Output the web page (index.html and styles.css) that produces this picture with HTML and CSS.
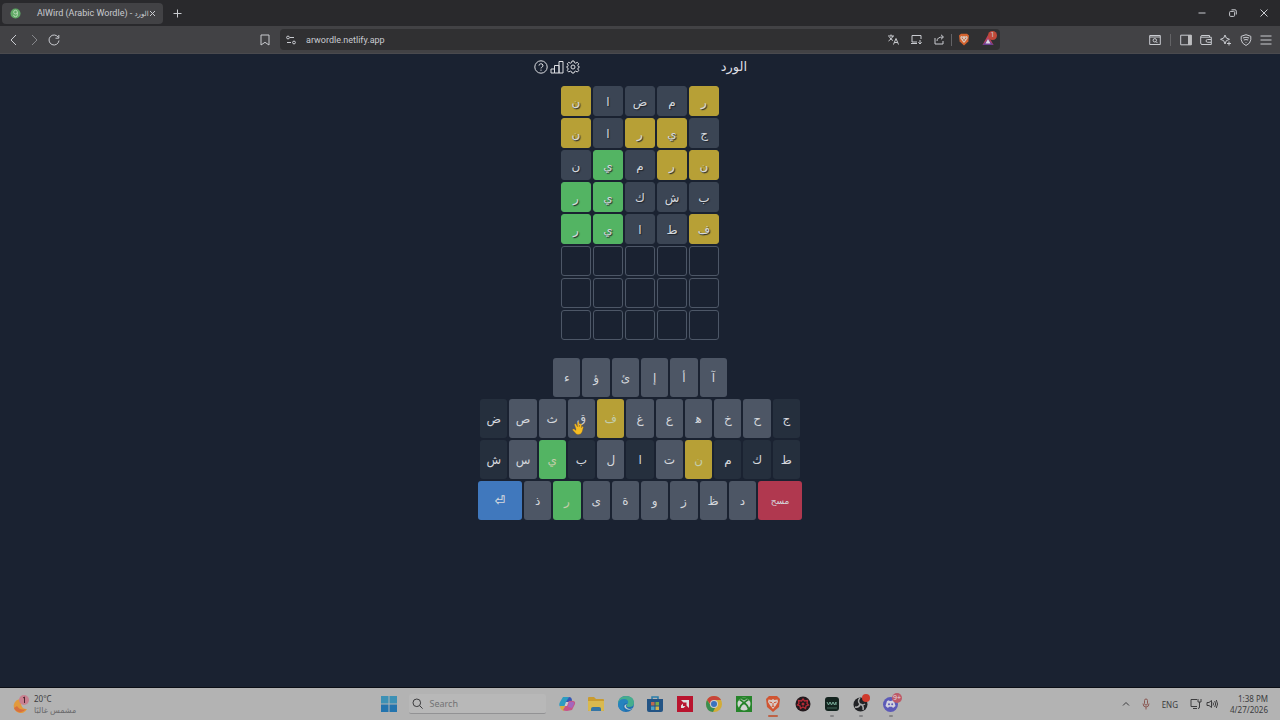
FILE: index.html
```html
<!DOCTYPE html>
<html lang="en">
<head>
    <meta charset="UTF-8">
    <meta name="viewport" content="width=device-width, initial-scale=1.0">
    <title>AlWird (Arabic Wordle) - الورد</title>
    <link rel="stylesheet" href="styles.css">
</head>
<body>
    <!-- Browser tabs -->
    <div class="tab-strip">
        <div class="tab">
            <svg class="favicon" viewBox="0 0 12 12"><circle cx="6" cy="6" r="5.5" fill="#5fa865"/><path d="M4 4.500a2 2 0 1 1 4 0v3a2 2 0 0 1-4 0M4 4.500a2 2 0 0 0 4 0" stroke="#b9dcb8" fill="none"/></svg>
            <span class="tab-title">AlWird (Arabic Wordle) - <span class="tab-title-ar" lang="ar">الورد</span></span>
            <button class="bare" aria-label="Close tab"><svg width="7" height="7" viewBox="0 0 7 7"><path d="M1 1l5 5M6 1L1 6"/></svg></button>
        </div>
        <button class="bare" aria-label="New tab"><svg width="9" height="9" viewBox="0 0 9 9"><path d="M4.500 .5v8M.5 4.500h8"/></svg></button>
        <div class="window-buttons">
            <button class="bare" aria-label="Minimize"><svg width="8" height="8" viewBox="0 0 8 8"><path d="M.5 4h7"/></svg></button>
            <button class="bare" aria-label="Restore"><svg width="8" height="8" viewBox="0 0 8 8"><rect x=".6" y="2.400" width="5" height="5" rx="1"/><path d="M2.500 .8h3.500q1.300 0 1.300 1.300V5.500"/></svg></button>
            <button class="bare" aria-label="Close"><svg width="8" height="8" viewBox="0 0 8 8"><path d="M.5.5l7 7M7.500.5l-7 7"/></svg></button>
        </div>
    </div>

    <!-- Address bar -->
    <div class="toolbar">
        <div class="nav-buttons">
            <button class="bare" aria-label="Back"><svg width="12" height="12" viewBox="0 0 12 12"><path d="M8 1L3 6l5 5"/></svg></button>
            <button class="bare dim" aria-label="Forward"><svg width="12" height="12" viewBox="0 0 12 12"><path d="M4 1l5 5-5 5"/></svg></button>
            <button class="bare" aria-label="Reload"><svg width="12" height="12" viewBox="0 0 12 12"><path d="M10.300 3.400A5 5 0 1 0 11 6.500M10.800 1v3.200H7.500"/></svg></button>
        </div>
        <button class="bare bookmark" aria-label="Bookmark"><svg width="12" height="12" viewBox="0 0 12 12"><path d="M2 1h8v10L6 8.300 2 11z"/></svg></button>
        <div class="address">
            <svg width="10" height="10" viewBox="0 0 10 10"><circle cx="2" cy="2.500" r="1.400"/><path d="M4 2.500h4M1 7.500h4"/><circle cx="8" cy="7.500" r="1.400"/></svg>
            <input type="text" class="url" value="arwordle.netlify.app" aria-label="Address">
            <button class="bare" aria-label="Translate"><svg width="11" height="11" viewBox="0 0 11 11"><path d="M0 2h6M3 .5V2M5 2Q4 5 .5 7M1.500 3q1.500 3 3.500 3.500M5.500 10.500L8 4.500l2.500 6M6.300 8.500h3.400"/></svg></button>
            <button class="bare" aria-label="Install"><svg width="11" height="11" viewBox="0 0 11 11"><path d="M10 5V1.500H1V8h5M0 9.500h6M9 6v4M7.300 8.300L9 10l1.700-1.700"/></svg></button>
            <button class="bare" aria-label="Share"><svg width="11" height="11" viewBox="0 0 11 11"><path d="M1 4v6h8V7M3 7q0-4 6-4M7 .8L9.500 3 7 5.300"/></svg></button>
            <span class="separator"></span>
            <button class="bare" aria-label="Brave Shields"><svg width="12" height="13" viewBox="0 0 12 13"><path class="shape" d="M3 .8h6l2 1.700-.7 6L6 12.500 1.700 8.500 1 2.500z" fill="#d4632f"/><path class="shape" d="M3 3l1.800.5L6 3l1.200.5L9 3l.8 2-2 3L6 10 4.200 8l-2-3z" fill="#d9c5ba"/><path d="M3.800 5l1.200.5M8.200 5L7 5.500M6 6v2" stroke="#b4562f"/></svg></button>
            <button class="bare rewards" aria-label="Rewards">
                <svg width="12" height="12" viewBox="0 0 12 12"><path class="shape" d="M6 1l5.500 10H.5z" fill="#bd425c"/><path class="shape" d="M6 5l5.500 6H.5z" fill="#6c3e91"/><path class="shape" d="M6 5l2.500 4.500h-5z" fill="#dfd9e3"/></svg>
                <span class="rewards-badge">1</span>
            </button>
        </div>
        <div class="side-buttons">
            <button class="bare" aria-label="Search tabs"><svg width="12" height="12" viewBox="0 0 12 12"><path d="M.7 1.500h10.600v9H.7zM.7 3h10.600"/><circle cx="5.800" cy="6.300" r="1.700"/><path d="M7 7.600l1.500 1.500"/></svg></button>
            <span class="separator"></span>
            <button class="bare" aria-label="Sidebar"><svg width="12" height="12" viewBox="0 0 12 12"><path d="M.7 1.200h10.600v9.600H.7z"/><path class="shape" d="M8 1h3.500v10H8z" fill="#bdbdbf"/></svg></button>
            <button class="bare" aria-label="Wallet"><svg width="12" height="12" viewBox="0 0 12 12"><path d="M9.500 3V1.500H2Q.7 1.500.7 3v6q0 1.500 1.300 1.500h9.300V3.200H1M11 5.500H7.500a1.300 1.300 0 0 0 0 2.800H11"/></svg></button>
            <button class="bare" aria-label="Leo AI"><svg width="12" height="12" viewBox="0 0 12 12"><path d="M5 1l1.300 3L9.500 5.300 6.300 6.700 5 10 3.700 6.700.5 5.300 3.700 4zM9 7.500v4M7 9.500h4"/></svg></button>
            <button class="bare" aria-label="VPN"><svg width="12" height="12" viewBox="0 0 12 12"><path d="M6 .7l4.800 1.600v3.400Q10.500 9.500 6 11.500 1.500 9.500 1.200 5.700V2.300zM3 4q3-1.500 6 0M3.800 6q2.200-1 4.400 0M6 8v.7"/></svg></button>
            <button class="bare" aria-label="Menu"><svg width="12" height="12" viewBox="0 0 12 12"><path d="M.5 2h11M.5 6h11M.5 10h11"/></svg></button>
        </div>
    </div>

    <!-- Game -->
    <main>
        <header class="game-header">
            <div class="game-menu">
                <button class="bare" aria-label="Help"><svg width="16" height="16" viewBox="0 0 16 16"><circle cx="8" cy="8" r="6.200"/><path d="M6 6.600a2 1.800 0 1 1 2.800 1.600Q8 8.600 8 9.400M8 10.600v1.200"/></svg></button>
                <button class="bare" aria-label="Statistics"><svg width="16" height="16" viewBox="0 0 16 16"><path d="M2 10h3.500v4H2zM5.500 6.500H10V14H5.500zM10 2.500h4V14h-4z"/></svg></button>
                <button class="bare" aria-label="Settings"><svg width="16" height="16" viewBox="0 0 16 16"><circle cx="8" cy="8" r="2"/><path d="M7 2h2l.5 1.700 1.200.5 1.600-.9 1.400 1.400-.9 1.600.5 1.200L14.500 8l-1.200.8-.5 1.200.9 1.600-1.400 1.400-1.600-.9-1.200.5L9 14H7l-.5-1.400-1.200-.5-1.600.9-1.400-1.400.9-1.600-.5-1.200L1.500 8l1.200-.5.5-1.200-.9-1.600 1.400-1.400 1.600.9 1.200-.5z"/></svg></button>
            </div>
            <h1>الورد</h1>
        </header>

        <div class="board" dir="rtl" lang="ar">
            <div class="cell present">ر</div><div class="cell absent">م</div><div class="cell absent">ض</div><div class="cell absent">ا</div><div class="cell present">ن</div>
            <div class="cell absent">ج</div><div class="cell present">ي</div><div class="cell present">ر</div><div class="cell absent">ا</div><div class="cell present">ن</div>
            <div class="cell present">ن</div><div class="cell present">ر</div><div class="cell absent">م</div><div class="cell correct">ي</div><div class="cell absent">ن</div>
            <div class="cell absent">ب</div><div class="cell absent">ش</div><div class="cell absent">ك</div><div class="cell correct">ي</div><div class="cell correct">ر</div>
            <div class="cell present">ف</div><div class="cell absent">ط</div><div class="cell absent">ا</div><div class="cell correct">ي</div><div class="cell correct">ر</div>
            <div class="cell"></div><div class="cell"></div><div class="cell"></div><div class="cell"></div><div class="cell"></div>
            <div class="cell"></div><div class="cell"></div><div class="cell"></div><div class="cell"></div><div class="cell"></div>
            <div class="cell"></div><div class="cell"></div><div class="cell"></div><div class="cell"></div><div class="cell"></div>
        </div>

        <div class="keyboard" dir="rtl" lang="ar">
            <div class="key-row row-short">
                <button class="key">آ</button><button class="key">أ</button><button class="key">إ</button><button class="key">ئ</button><button class="key">ؤ</button><button class="key">ء</button>
            </div>
            <div class="key-row row-letters">
                <button class="key absent">ج</button><button class="key">ح</button><button class="key">خ</button><button class="key">ه&zwj;</button><button class="key">ع</button><button class="key">غ</button><button class="key present">ف</button><button class="key hovered">ق<svg class="pointer" width="12" height="14" viewBox="0 0 12 14"><path d="M4 8L2.500 3.500Q3 2 4 3.200L5.500 6V1.500q.8-1.200 1.600 0V6l1-3q1-.8 1.500.3L9.300 7l1-1.500q1-.3 1 .8L10 11q-1 2.500-4 2.500-2 0-3-2L.6 9Q.7 7.500 2 8l2 1.500z" fill="#f5bd22" stroke="#a36e16" stroke-width=".3"/></svg></button><button class="key">ث</button><button class="key">ص</button><button class="key absent">ض</button>
            </div>
            <div class="key-row row-letters">
                <button class="key absent">ط</button><button class="key absent">ك</button><button class="key absent">م</button><button class="key present">ن</button><button class="key">ت</button><button class="key absent">ا</button><button class="key">ل</button><button class="key absent">ب</button><button class="key correct">ي</button><button class="key">س</button><button class="key absent">ش</button>
            </div>
            <div class="key-row">
                <button class="key delete">مسح</button><button class="key">د</button><button class="key">ظ</button><button class="key">ز</button><button class="key">و</button><button class="key">ة</button><button class="key">ى</button><button class="key correct">ر</button><button class="key">ذ</button><button class="key enter">⏎</button>
            </div>
        </div>
    </main>

    <!-- Taskbar -->
    <footer class="taskbar">
        <div class="weather">
            <svg width="18" height="20" viewBox="0 0 18 20"><path d="M9 5a7 7 0 1 0 6 10Q8 16 9 5" fill="#e29a3c"/><path d="M5 12q3 5 9 3-3 4-7 3t-5-4z" fill="#d7703e"/><circle cx="12" cy="6" r="5" fill="#c98090"/><path d="M11 4l1.500-1v6" stroke="#4c2733" fill="none"/></svg>
            <div>
                <div>20°C</div>
                <div class="muted" dir="rtl" lang="ar">مشمس غالبًا</div>
            </div>
        </div>
        <div class="apps">
            <button class="app" aria-label="Start"><svg viewBox="0 0 18 18"><path d="M1 1h7.500v7.500H1zM9.500 1H17v7.500H9.500z" fill="#3d91b5"/><path d="M1 9.500h7.500V17H1zM9.500 9.500H17V17H9.500z" fill="#2374ae"/></svg></button>
            <label class="search">
                <svg width="11" height="11" viewBox="0 0 11 11"><circle cx="4.800" cy="4.800" r="3.800"/><path d="M7.600 7.600l3 3"/></svg>
                <input type="search" placeholder="Search" aria-label="Search">
            </label>
            <button class="app" aria-label="Copilot"><svg viewBox="0 0 18 18"><path d="M5 2h6l-3 9-5 1Q0 11 2 7z" fill="#2d9cc1"/><path d="M11 2q3 0 3 4l-3 1H8z" fill="#3455b5"/><path d="M2 11h5l-1 5q-4-1-4-5" fill="#d5ac44"/><path d="M5 15l3-5 3-4q7-1 6 3l-3 6-5 1q-3 0-4-1" fill="#c65487"/><path d="M11 7q6-1 5 2l-2 4-4-1z" fill="#a366bd"/><path d="M8 7h2.500L9 11H6.500z" fill="#ccc"/></svg></button>
            <button class="app" aria-label="File Explorer"><svg viewBox="0 0 18 18"><path d="M1 3q0-1 1-1h5l2 2h7q1 0 1 1v11H1z" fill="#c99b2f"/><path d="M1 6h16v9q0 1-1 1H2q-1 0-1-1z" fill="#d9b94f"/><path d="M4 16v-2q0-2 2-2h6q2 0 2 2v2z" fill="#3475a5"/></svg></button>
            <button class="app" aria-label="Microsoft Edge"><svg viewBox="0 0 18 18"><circle cx="9" cy="9" r="8" fill="#2170b0"/><path d="M1 8Q2 1 9 1q8 0 8 7 0 4-5 4-3 0-2-2 1-4-3-4-4 0-6 4" fill="#45ad8d"/><path d="M1 9q1-5 6-5 5 0 4 5-2-2-4 0-2 3 1 7-7 0-7-7" fill="#2583be"/><path d="M10 9q-2 2 0 4 3 2 6 0l-1 1q-4 2-7-1-2-3 2-4" fill="#c6cdd0"/></svg></button>
            <button class="app" aria-label="Microsoft Store"><svg viewBox="0 0 18 18"><path d="M6 5V2h6v3" fill="none" stroke="#287eac" stroke-width="1.500"/><path d="M1 4h16v11q0 2-2 2H3q-2 0-2-2z" fill="#235485"/><path d="M5 7h3.500v3.500H5z" fill="#bd6851"/><path d="M9.500 7H13v3.500H9.500z" fill="#79a94b"/><path d="M5 11.500h3.500V15H5z" fill="#4da2c6"/><path d="M9.500 11.500H13V15H9.500z" fill="#d1b34f"/></svg></button>
            <button class="app" aria-label="AMD Software"><svg viewBox="0 0 18 18"><path d="M1 1h16v16H1z" fill="#b9142e"/><path d="M5 5h8v8l-2.500-2.500v-3h-3z" fill="#ddd"/><path d="M5 10.500L7 8.500V11h2.500l-2 2H5z" fill="#ddd"/></svg></button>
            <button class="app" aria-label="Chrome"><svg viewBox="0 0 18 18"><circle cx="9" cy="9" r="8" fill="#d2ac36"/><path d="M2 5q2-4 7-4t7 4H9L6 10z" fill="#c7443a"/><path d="M2 5l4 6 4 2-2 4Q1 16 1 9q0-2 1-4" fill="#398d50"/><circle cx="9" cy="9" r="4" fill="#ccc"/><circle cx="9" cy="9" r="3" fill="#3972bd"/></svg></button>
            <button class="app" aria-label="Xbox"><svg viewBox="0 0 18 18"><path d="M1 1h16v16H1z" fill="#26842a"/><circle cx="9" cy="9" r="6.500" fill="#d0d4d0"/><path d="M4.500 4Q6.500 3.500 9 5.500 11.500 3.500 13.500 4 9 1 4.500 4" fill="#26842a"/><path d="M4.500 4.500Q8 6.500 9 8q1-1.500 4.500-3.500M9 7.500Q5 10.500 4.500 14M9 7.500q4 3 4.500 6.500" stroke="#26842a" stroke-width="1.600" fill="none"/></svg></button>
            <button class="app active" aria-label="Brave"><svg viewBox="0 0 18 18"><path d="M5 1h8l3 3-1 8-6 5-6-5-1-8z" fill="#d05532"/><path d="M4.500 4.500l3 .5L9 4l1.500 1 3-.5L14 7l-2.500 4L9 14l-2.500-3L4 7z" fill="#d9cbc5"/><path d="M5.500 7l2.500.7M12.500 7l-2.500.7M9 8v3l-1.500 1M9 11l1.500 1" stroke="#d05532" fill="none"/></svg></button>
            <button class="app" aria-label="Game launcher"><svg viewBox="0 0 18 18"><circle cx="9" cy="9" r="7.500" fill="#231a1e"/><path d="M9 4l1.500 2 3-.5-.5 3 1.500 1.500-2.500 1-.5 2.500L9 12l-2.500 1.500L6 11l-2.500-1L5 8.500l-.5-3 3 .5z" fill="none" stroke="#b62a35" stroke-width="1.300"/><circle cx="9" cy="9" r="1.500" fill="#b62a35"/></svg></button>
            <button class="app running" aria-label="Recorder"><svg viewBox="0 0 18 18"><rect x="2" y="2" width="14" height="14" rx="3" fill="#14241f"/><path d="M4 7l1.500 3L7 7l1.500 3L10 7l1.500 3L13 7v3" fill="none" stroke="#78aa98"/><path d="M4 13h10" stroke="#42665a"/></svg></button>
            <button class="app running" aria-label="OBS Studio"><svg viewBox="0 0 18 18"><circle cx="8.500" cy="9.500" r="7" fill="#222326"/><path d="M8 3q-3 3 0 6 2 2 5 0M8 9q-1 4-5 3M8 9q4 1 3 6" stroke="#a9a9aa" fill="none" stroke-width="1.500"/></svg><span class="app-badge"></span></button>
            <button class="app running" aria-label="Discord"><svg viewBox="0 0 18 18"><circle cx="8.500" cy="9.500" r="7.500" fill="#5c5ab8"/><path d="M5 6l2-.7.5.7h2l.5-.7 2 .7 1.500 5-2.500 2-1-1.300H7L6 13l-2.500-2z" fill="#d3d2df"/><circle cx="7" cy="9.300" r="1" fill="#5c5ab8"/><circle cx="10.200" cy="9.300" r="1" fill="#5c5ab8"/></svg><span class="app-badge count">9+</span></button>
        </div>
        <div class="tray">
            <button class="bare" aria-label="Hidden icons"><svg width="8" height="8" viewBox="0 0 8 8"><path d="M1 5.500l3-3 3 3"/></svg></button>
            <button class="bare mic" aria-label="Microphone"><svg width="8" height="12" viewBox="0 0 8 12"><rect x="2.500" y="1" width="3" height="6" rx="1.500"/><path d="M1 5.500q0 3.500 3 3.500t3-3.500M4 9v2.500"/></svg></button>
            <span>ENG</span>
            <button class="bare network" aria-label="Network and volume">
                <svg width="12" height="12" viewBox="0 0 12 12"><path d="M7 1.500H1v7h6M3 10.500h4M8 1v3h3V1M9.500 4v5q0 1.500-1.500 1.500"/></svg>
                <svg width="12" height="12" viewBox="0 0 12 12"><path d="M1 4.500h2l2.500-2v7L3 7.500H1zM7 4.500q1 1.500 0 3M8.700 3q2 3 0 6M10.300 2q2.500 4 0 8"/></svg>
            </button>
            <div class="clock">
                <div>1:38 PM</div>
                <div>4/27/2026</div>
            </div>
        </div>
    </footer>
</body>
</html>
```
FILE: styles.css
```css
* {
    box-sizing: border-box;
}

body {
    margin: 0;
    min-height: 100vh;
    display: flex;
    flex-direction: column;
    background-color: #1a2231;
    color: #c9cbd0;
    font-family: Roboto, "DejaVu Sans", sans-serif;
    font-size: 9px;
    line-height: 12px;
}

button,
input {
    font: inherit;
    color: inherit;
}

button {
    padding: 0;
    border: none;
    cursor: pointer;
}

input {
    min-width: 0;
    padding: 0;
    border: none;
    background: none;
    outline: none;
}

svg {
    flex-shrink: 0;
}

.bare {
    display: flex;
    background: none;
}

.bare svg,
.address > svg,
.search svg {
    fill: none;
    stroke: currentColor;
}

.bare .shape {
    stroke: none;
}

.dim {
    opacity: 0.5;
}

.separator {
    width: 1px;
    height: 12px;
    background-color: #636366;
}

/* Browser tabs */
.tab-strip {
    display: flex;
    align-items: center;
    gap: 10px;
    height: 26px;
    padding: 0 12px 0 2px;
    background-color: #29292c;
}

.tab {
    display: flex;
    align-items: center;
    width: 161px;
    height: 21px;
    padding: 0 7px 0 8px;
    border-radius: 4px;
    background-color: #424245;
}

.favicon {
    width: 11px;
    height: 11px;
    margin-right: 16px;
}

.tab-title {
    flex: 1;
    white-space: nowrap;
}

.tab-title-ar {
    font-size: 7px;
}

.window-buttons {
    display: flex;
    gap: 23px;
    margin-left: auto;
}

/* Address bar */
.toolbar {
    display: grid;
    grid-template-columns: 1fr auto minmax(0, 720px) 1fr;
    align-items: center;
    height: 28px;
    padding: 0 8px;
    background-color: #424245;
    border-bottom: 1px solid #4a4a4e;
}

.nav-buttons {
    display: flex;
    gap: 8px;
}

/* the bookmark button hangs off the left column so the address stays centred */
.bookmark {
    margin-left: -21px;
    width: 21px;
}

.address {
    display: flex;
    align-items: center;
    gap: 12px;
    height: 21px;
    padding: 0 4px 0 6px;
    border-radius: 4px;
    background-color: #303032;
}

.url {
    flex: 1;
    margin-left: -2px;
}

.address .separator {
    margin: 0 -6px;
}

.rewards {
    position: relative;
    margin-right: 2px;
}

.rewards-badge {
    position: absolute;
    top: -3px;
    right: -3px;
    width: 9px;
    height: 9px;
    border-radius: 50%;
    background-color: #c1493a;
    font-size: 7px;
    line-height: 9px;
    text-align: center;
}

.side-buttons {
    display: flex;
    justify-content: flex-end;
    gap: 8px;
}

.side-buttons .separator {
    margin: 0 1px;
}

/* Game */
main {
    flex: 1;
    display: flex;
    flex-direction: column;
    align-items: center;
    padding: 4px 8px;
}

.game-header {
    display: flex;
    align-items: center;
    justify-content: space-between;
    width: 100%;
    max-width: 214px;
    height: 18px;
    margin-bottom: 10px;
    color: #dddee2;
}

.game-menu {
    display: flex;
}

h1 {
    margin: 0;
    font-family: "DejaVu Sans", sans-serif;
    font-size: 13px;
    font-weight: normal;
    line-height: 18px;
}

.board {
    display: grid;
    grid-template-columns: repeat(5, 30px);
    gap: 2px;
    margin-bottom: 18px;
}

.cell,
.key {
    display: flex;
    align-items: center;
    justify-content: center;
    padding-top: 1px;
    border-radius: 3px;
    font-family: "DejaVu Sans", sans-serif;
    font-size: 12px;
    color: #d5d8dd;
}

.cell {
    height: 30px;
    border: 1px solid #4d5767;
    text-shadow: 1px 1px 1px #20262e;
}

.cell.absent {
    background-color: #3b4554;
    border-color: #3b4554;
}

.cell.present,
.key.present {
    background-color: #b7a036;
    border-color: #b7a036;
}

.cell.correct,
.key.correct {
    background-color: #53b463;
    border-color: #53b463;
}

.keyboard {
    display: flex;
    flex-direction: column;
    align-items: center;
    gap: 2px;
    width: 100%;
    max-width: 324px;
}

.key-row {
    display: flex;
    gap: 2px;
    width: 100%;
}

.row-letters {
    max-width: 320px;
}

.row-short {
    max-width: 174px;
}

.key {
    flex: 1;
    height: 39px;
    background-color: #4d5665;
}

.key.absent {
    background-color: #252f3d;
}

.key.present,
.key.correct {
    color: #c3cdab;
}

.key.enter,
.key.delete {
    flex: 0 0 44px;
    font-size: 9px;
}

.key.enter {
    background-color: #4078bd;
    font-size: 13px;
    font-weight: bold;
}

.key.delete {
    background-color: #b0384f;
}

.hovered {
    position: relative;
}

.pointer {
    position: absolute;
    top: 22px;
    left: 4px;
}

/* Taskbar */
.taskbar {
    display: grid;
    grid-template-columns: 1fr minmax(0, 520px) 1fr;
    align-items: center;
    height: 33px;
    padding: 0 12px;
    border-top: 1px solid #0c0f16;
    background-color: #b3b3b3;
    color: #3c3c3e;
    font-family: "Noto Sans", "DejaVu Sans", sans-serif;
    font-size: 8px;
    line-height: 11px;
}

.weather {
    display: flex;
    align-items: center;
    gap: 4px;
}

.muted {
    color: #69696b;
}

.apps {
    display: flex;
    align-items: center;
    justify-content: space-between;
}

.app {
    position: relative;
    display: flex;
    width: 18px;
    height: 18px;
    background: none;
}

.app.active::after,
.app.running::after {
    content: "";
    position: absolute;
    bottom: -4px;
    left: 7px;
    width: 4px;
    height: 2px;
    border-radius: 1px;
    background-color: #858587;
}

.app.active::after {
    left: 4px;
    width: 10px;
    background-color: #bd6347;
}

.app-badge {
    position: absolute;
    top: -1px;
    right: 0;
    width: 8px;
    height: 8px;
    border-radius: 50%;
    background-color: #d03a2c;
}

.app-badge.count {
    top: -2px;
    right: -2px;
    width: 10px;
    height: 10px;
    background-color: #bd5a68;
    color: #e5dadd;
    font-size: 7px;
    line-height: 10px;
}

.search {
    display: flex;
    align-items: center;
    gap: 6px;
    width: 137px;
    height: 20px;
    padding-left: 3px;
    border-bottom: 1px solid #929294;
    border-radius: 2px;
    background-color: #b8b8b8;
}

.search input {
    flex: 1;
    font-size: 9px;
}

.search input::placeholder {
    color: #727274;
}

.tray {
    display: flex;
    align-items: center;
    justify-content: flex-end;
    gap: 12px;
}

.mic {
    color: #8a5751;
}

.network {
    gap: 4px;
}

.clock {
    text-align: right;
}
```
